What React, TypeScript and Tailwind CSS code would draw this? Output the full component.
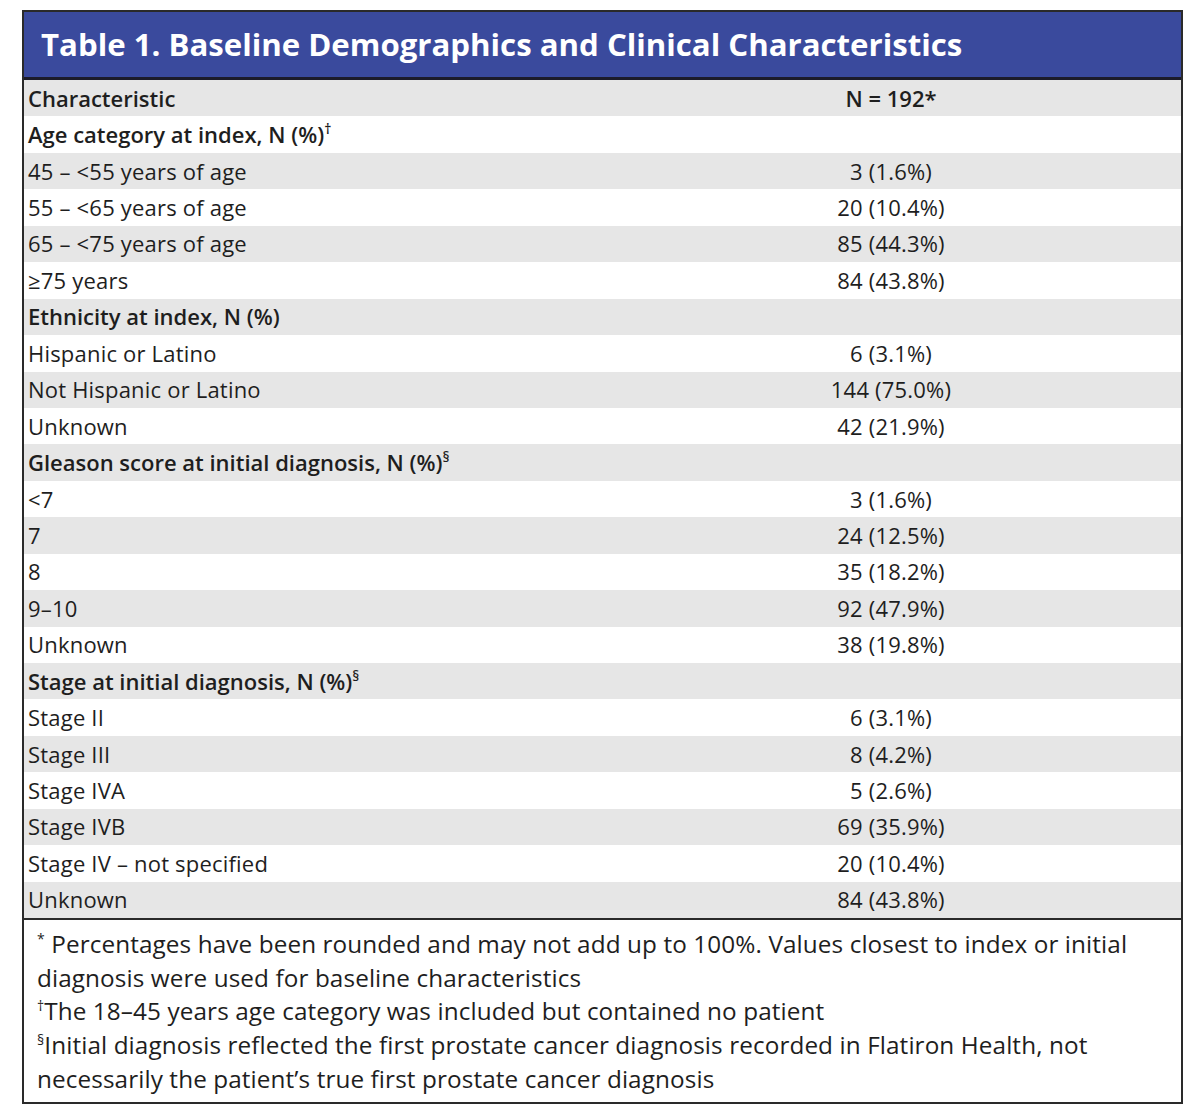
import React from "react";

type Row = { label: React.ReactNode; value?: string; bold?: boolean };

const Sup = ({ c }: { c: string }) => (
  <span className="inline-block text-[14px] leading-[12px] h-[12px] align-[9px]">{c}</span>
);

const rows: Row[] = [
  { label: "Characteristic", value: "N = 192*", bold: true },
  { label: <>Age category at index, N (%)<Sup c="†" /></>, bold: true },
  { label: "45 – <55 years of age", value: "3 (1.6%)" },
  { label: "55 – <65 years of age", value: "20 (10.4%)" },
  { label: "65 – <75 years of age", value: "85 (44.3%)" },
  { label: "≥75 years", value: "84 (43.8%)" },
  { label: "Ethnicity at index, N (%)", bold: true },
  { label: "Hispanic or Latino", value: "6 (3.1%)" },
  { label: "Not Hispanic or Latino", value: "144 (75.0%)" },
  { label: "Unknown", value: "42 (21.9%)" },
  { label: <>Gleason score at initial diagnosis, N (%)<Sup c="§" /></>, bold: true },
  { label: "<7", value: "3 (1.6%)" },
  { label: "7", value: "24 (12.5%)" },
  { label: "8", value: "35 (18.2%)" },
  { label: "9–10", value: "92 (47.9%)" },
  { label: "Unknown", value: "38 (19.8%)" },
  { label: <>Stage at initial diagnosis, N (%)<Sup c="§" /></>, bold: true },
  { label: "Stage II", value: "6 (3.1%)" },
  { label: "Stage III", value: "8 (4.2%)" },
  { label: "Stage IVA", value: "5 (2.6%)" },
  { label: "Stage IVB", value: "69 (35.9%)" },
  { label: "Stage IV – not specified", value: "20 (10.4%)" },
  { label: "Unknown", value: "84 (43.8%)" },
];

export default function App() {
  return (
    <div className="w-[1200px] h-[1114px] bg-white pt-[10px] pl-[22px]" style={{ fontFamily: '"Open Sans", "Noto Sans", sans-serif' }}>
      <div className="w-[1161px] border-2 border-[#2a2a2a] text-[#1e1e1e]">
        <div className="h-[68px] bg-[#3a4a9d] border-b-[3px] border-[#1c1c2a] flex items-center pl-[17px]">
          <span className="text-white font-bold text-[31.2px]">Table 1. Baseline Demographics and Clinical Characteristics</span>
        </div>
        {rows.map((r, i) => (
          <div key={i} className={`flex h-[36.45px] items-center text-[22px] ${i % 2 === 0 ? "bg-[#e6e6e6]" : "bg-white"} ${r.bold ? "font-semibold" : "tracking-[0.2px]"}`}>
            <div className="w-[577px] pl-[4px] whitespace-nowrap">{r.label}</div>
            <div className="flex-1 text-center">{r.value ?? ""}</div>
          </div>
        ))}
        <div className="border-t-2 border-[#2a2a2a] pl-[13px] pr-[10px] pt-[7px] pb-[6px] text-[24.3px] leading-[33.7px] tracking-[0.1px]">
          <p><Sup c="*" /> Percentages have been rounded and may not add up to 100%. Values closest to index or initial diagnosis were used for baseline characteristics</p>
          <p><Sup c="†" />The 18–45 years age category was included but contained no patient</p>
          <p><Sup c="§" />Initial diagnosis reflected the first prostate cancer diagnosis recorded in Flatiron Health, not necessarily the patient’s true first prostate cancer diagnosis</p>
        </div>
      </div>
    </div>
  );
}
